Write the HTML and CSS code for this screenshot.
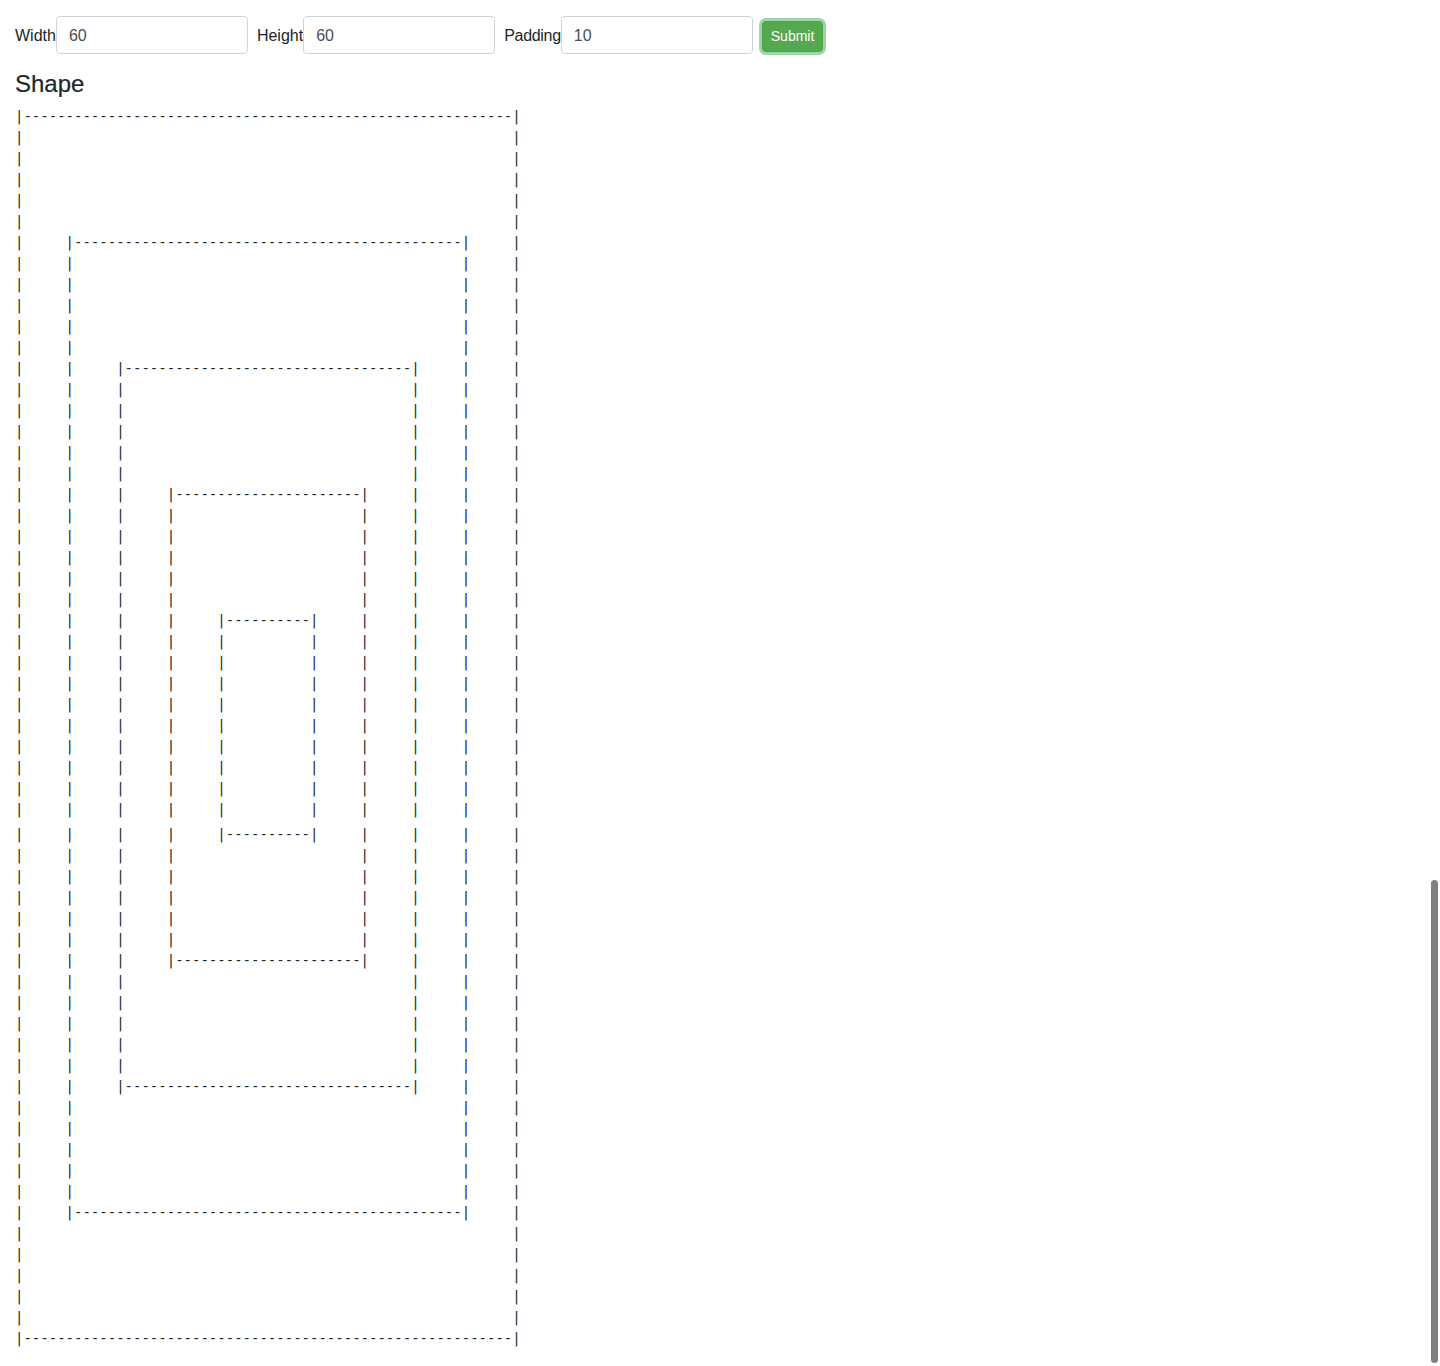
FILE: index.html
```html
<!DOCTYPE html>
<html lang="en">
<head>
<meta charset="utf-8">
<title>Shape</title>
<link rel="stylesheet" href="styles.css">
</head>
<body>
<div class="page">
  <form class="controls">
    <label class="field"><span class="field-label">Width</span><input class="field-input" type="text" value="60"></label>
    <label class="field"><span class="field-label">Height</span><input class="field-input" type="text" value="60"></label>
    <label class="field"><span class="field-label field-label-tight">Padding</span><input class="field-input" type="text" value="10"></label>
    <button class="submit" type="button">Submit</button>
  </form>
  <h4 class="title">Shape</h4>
<pre class="art">|----------------------------------------------------------|
|                                                          |
|                                                          |
|                                                          |
|                                                          |
|                                                          |
|     |----------------------------------------------|     |
|     |                                              |     |
|     |                                              |     |
|     |                                              |     |
|     |                                              |     |
|     |                                              |     |
|     |     |----------------------------------|     |     |
|     |     |                                  |     |     |
|     |     |                                  |     |     |
|     |     |                                  |     |     |
|     |     |                                  |     |     |
|     |     |                                  |     |     |
|     |     |     |----------------------|     |     |     |
|     |     |     |                      |     |     |     |
|     |     |     |                      |     |     |     |
|     |     |     |                      |     |     |     |
|     |     |     |                      |     |     |     |
|     |     |     |                      |     |     |     |
|     |     |     |     |----------|     |     |     |     |
|     |     |     |     |          |     |     |     |     |
|     |     |     |     |          |     |     |     |     |
|     |     |     |     |          |     |     |     |     |
|     |     |     |     |          |     |     |     |     |
|     |     |     |     |          |     |     |     |     |
|     |     |     |     |          |     |     |     |     |
|     |     |     |     |          |     |     |     |     |
|     |     |     |     |          |     |     |     |     |
|     |     |     |     |          |     |     |     |     |<span class="seam"></span>|     |     |     |     |----------|     |     |     |     |
|     |     |     |                      |     |     |     |
|     |     |     |                      |     |     |     |
|     |     |     |                      |     |     |     |
|     |     |     |                      |     |     |     |
|     |     |     |                      |     |     |     |
|     |     |     |----------------------|     |     |     |
|     |     |                                  |     |     |
|     |     |                                  |     |     |
|     |     |                                  |     |     |
|     |     |                                  |     |     |
|     |     |                                  |     |     |
|     |     |----------------------------------|     |     |
|     |                                              |     |
|     |                                              |     |
|     |                                              |     |
|     |                                              |     |
|     |                                              |     |
|     |----------------------------------------------|     |
|                                                          |
|                                                          |
|                                                          |
|                                                          |
|                                                          |
|----------------------------------------------------------|</pre>
</div>
<div class="scroll-thumb" aria-hidden="true"></div>
</body>
</html>
```

FILE: styles.css
```css
html, body {
  margin: 0;
  padding: 0;
  background: #ffffff;
}

body {
  font-family: "Liberation Sans", Arial, sans-serif;
  font-size: 16px;
  line-height: 1.5;
  color: #212529;
}

.page {
  padding: 16px 15px 0 15px;
}

.controls {
  display: flex;
  align-items: center;
  margin: 0 0 16px 0;
}

.field {
  display: flex;
  align-items: center;
  margin-right: 9px;
}

.field-label {
  color: #212529;
  padding-top: 1px;
}

.field-label-tight {
  letter-spacing: -0.3px;
}

.field-input {
  box-sizing: border-box;
  width: 192px;
  height: 38px;
  padding: 7px 12px 5px 12px;
  font-family: "Liberation Sans", Arial, sans-serif;
  font-size: 16px;
  line-height: 1.5;
  color: #495057;
  background: #ffffff;
  border: 1px solid #ced4da;
  border-radius: 4px;
  margin: 0;
}

.submit {
  box-sizing: border-box;
  margin-left: 0;
  margin-top: 2px;
  height: 31px;
  padding: 4px 8px 3px 8px;
  font-family: "Liberation Sans", Arial, sans-serif;
  font-size: 14px;
  line-height: 1.5;
  color: #ffffff;
  background: #54a84d;
  border: 1px solid #4fa248;
  border-radius: 4px;
  box-shadow: 0 0 0 3px #9dd7a9;
  cursor: pointer;
}

.title {
  margin: 0 0 7px 0;
  font-size: 24px;
  font-weight: 500;
  line-height: 1.2;
  color: #212529;
  -webkit-text-stroke: 0.2px #212529;
}

.art {
  margin: 0;
  font-family: "DejaVu Sans Mono", "Liberation Mono", monospace;
  font-size: 14px;
  line-height: 21px;
  color: #212529;
}

.seam {
  display: block;
  height: 4px;
}

.scroll-thumb {
  position: fixed;
  right: 2px;
  top: 880px;
  width: 7px;
  height: 483px;
  border-radius: 4px;
  background: #7f7f7f;
}
```
